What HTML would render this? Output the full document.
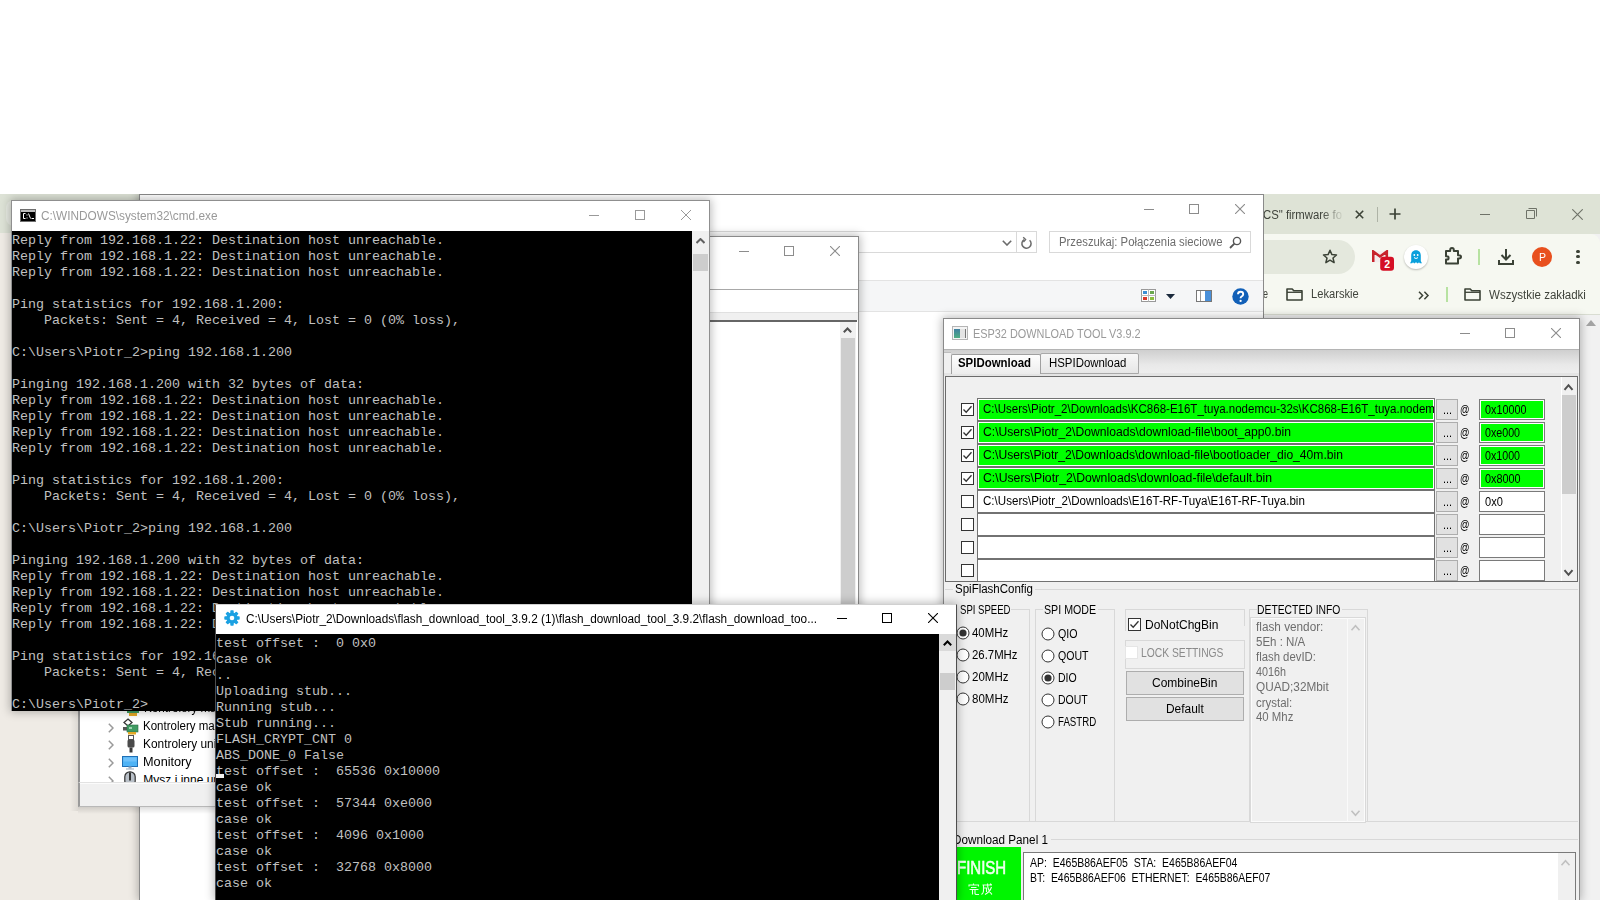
<!DOCTYPE html>
<html><head><meta charset="utf-8">
<style>
*{box-sizing:border-box;margin:0;padding:0}
html,body{width:1600px;height:900px;overflow:hidden;background:#fff;font-family:"Liberation Sans",sans-serif;font-size:12px;color:#000;position:relative}
.a{position:absolute}
.t{position:absolute;white-space:pre;line-height:1}
.mono{font-family:"Liberation Mono",monospace}
.win{position:absolute;overflow:hidden}
.shadow{box-shadow:0 0 9px 1px rgba(0,0,0,.28)}
svg{display:block}
</style></head>
<body>
<div class="a" style="left:0;top:194px;width:1600px;height:706px;background:#efebe5"></div>
<div class="a" style="left:0;top:194px;width:139px;height:39px;background:#dde2d6"></div>
<div class="a" style="left:6px;top:200px;width:8px;height:26px;border-radius:8px 0 0 8px;background:#e8ebe3"></div>
<div class="win shadow" id="explorer" style="left:139px;top:194px;width:1125px;height:706px"><div class="a" style="left:-139px;top:-194px;width:1600px;height:900px">
<div class="a" style="left:139px;top:194px;width:1125px;height:706px;background:#fff;border:1px solid #8a8a8a;border-bottom:none"></div>
<div class="a" style="left:1144px;top:209px;width:10px;height:1px;background:#8c8c8c"></div>
<div class="a" style="left:1189px;top:204px;width:10px;height:10px;border:1px solid #8c8c8c"></div>
<svg class="a" style="left:1235px;top:204px" width="10" height="10"><path d="M0 0L10 10M10 0L0 10" stroke="#8c8c8c" stroke-width="1.1"/></svg>
<div class="a" style="left:600px;top:231px;width:437px;height:22px;background:#fff;border:1px solid #d9d9d9"></div>
<div class="a" style="left:1016px;top:231px;width:1px;height:22px;background:#d9d9d9"></div>
<svg class="a" style="left:1002px;top:240px" width="10" height="6"><path d="M0.8 0.8L5 5L9.2 0.8" stroke="#6b6b6b" stroke-width="1.6" fill="none"/></svg>
<svg class="a" style="left:1020px;top:236px" width="13" height="14" viewBox="0 0 13 14"><path d="M9.6 4.2A4.6 4.6 0 1 1 4.2 3.6" stroke="#6b6b6b" stroke-width="1.5" fill="none"/><path d="M3.2 1.2L5.6 3.6L3.4 6" stroke="#6b6b6b" stroke-width="1.4" fill="none"/></svg>
<div class="a" style="left:1049px;top:231px;width:202px;height:22px;background:#fff;border:1px solid #d9d9d9"></div>
<div class="t" style="left:1058.50px;top:235.84px;font-size:12px;color:#6d6d6d;font-family:'Liberation Sans';transform:scaleX(0.9428);transform-origin:0 0;">Przeszukaj: Połączenia sieciowe</div><svg class="a" style="left:1229px;top:236px" width="13" height="13" viewBox="0 0 13 13"><circle cx="8" cy="5" r="3.6" stroke="#555" stroke-width="1.4" fill="none"/><path d="M5.4 7.6L1 12" stroke="#555" stroke-width="1.8"/></svg>
<div class="a" style="left:140px;top:280px;width:1123px;height:32px;background:#f5f6f7;border-top:1px solid #e3e3e3;border-bottom:1px solid #e3e3e3"></div>
<svg class="a" style="left:1141px;top:289px" width="15" height="13" viewBox="0 0 15 13"><rect x="0.5" y="0.5" width="14" height="12" fill="#fff" stroke="#999"/><path d="M7.5 0.5V12.5M0.5 6.5H14.5" stroke="#bbb"/><rect x="2" y="2" width="4" height="3" fill="#3d8fd6"/><rect x="9" y="2" width="4" height="3" fill="#6aa84f"/><rect x="2" y="8" width="4" height="3" fill="#d9382b"/><rect x="9" y="8" width="4" height="3" fill="#8bbf3f"/></svg>
<svg class="a" style="left:1166px;top:294px" width="9" height="5"><path d="M0 0H9L4.5 5Z" fill="#1b2a3d"/></svg>
<svg class="a" style="left:1196px;top:290px" width="16" height="12" viewBox="0 0 16 12"><rect x="0.5" y="0.5" width="15" height="11" fill="#fff" stroke="#777"/><rect x="9" y="1" width="6" height="10" fill="#4a90d9"/><path d="M4.5 1V11" stroke="#999"/></svg>
<svg class="a" style="left:1232px;top:288px" width="17" height="17" viewBox="0 0 17 17"><circle cx="8.5" cy="8.5" r="8.2" fill="#1260b8"/><path d="M6 6.3Q6 3.8 8.6 3.8Q11.2 3.8 11.2 6.2Q11.2 7.7 9.6 8.5Q8.6 9 8.6 10.3" stroke="#fff" stroke-width="1.9" fill="none"/><circle cx="8.6" cy="12.9" r="1.15" fill="#fff"/></svg>
</div></div>
<div class="win" id="chrome" style="left:1264px;top:194px;width:336px;height:706px"><div class="a" style="left:-1264px;top:-194px;width:1600px;height:900px">
<div class="a" style="left:1264px;top:194px;width:336px;height:706px;background:#f1f1f1"></div>
<div class="a" style="left:1264px;top:194px;width:336px;height:40px;background:#dee3d6"></div>
<div class="a" style="left:1262px;top:200px;width:80px;height:24px;overflow:hidden;-webkit-mask-image:linear-gradient(90deg,#000 60px,transparent 82px)"><div class="t" style="left:1.00px;top:9.34px;font-size:12px;color:#40443c;font-family:'Liberation Sans';transform:scaleX(0.9449);transform-origin:0 0;">CS" firmware fo</div></div>
<svg class="a" style="left:1355px;top:210px" width="9" height="9"><path d="M0.8 0.8L8.2 8.2M8.2 0.8L0.8 8.2" stroke="#3b4236" stroke-width="1.6"/></svg>
<div class="a" style="left:1377px;top:207px;width:1px;height:15px;background:#aeb3a6"></div>
<svg class="a" style="left:1389px;top:208px" width="12" height="12"><path d="M6 0.5V11.5M0.5 6H11.5" stroke="#3b4236" stroke-width="1.7"/></svg>
<div class="a" style="left:1480px;top:214px;width:10px;height:1px;background:#6e7268"></div>
<svg class="a" style="left:1526px;top:208px" width="12" height="12"><path d="M2.5 0.5H10.5V8.5M0.5 2.5H8.5V10.5H0.5Z" stroke="#6e7268" stroke-width="1" fill="none"/></svg>
<svg class="a" style="left:1572px;top:209px" width="11" height="11"><path d="M0.3 0.3L10.7 10.7M10.7 0.3L0.3 10.7" stroke="#6e7268" stroke-width="1.1"/></svg>
<div class="a" style="left:1264px;top:234px;width:336px;height:80px;background:#f6f8f1;border-top-right-radius:9px"></div>
<div class="a" style="left:1200px;top:240px;width:155px;height:34px;background:#e4e8dd;border-radius:17px"></div>
<svg class="a" style="left:1322px;top:249px" width="16" height="15" viewBox="0 0 16 15"><path d="M8 1.3L9.9 5.6L14.5 6L11 9L12.1 13.6L8 11.2L3.9 13.6L5 9L1.5 6L6.1 5.6Z" stroke="#3b4236" stroke-width="1.5" fill="none" stroke-linejoin="round"/></svg>
<svg class="a" style="left:1372px;top:250px" width="23" height="21" viewBox="0 0 23 21"><rect x="0.5" y="0.8" width="15" height="11.5" fill="#f3eded"/><path d="M1.2 12V1.5L8 6.5L14.8 1.5V12" stroke="#c8232c" stroke-width="2.6" fill="none"/><rect x="8.2" y="6.8" width="13.8" height="14" rx="3" fill="#d50f25"/><text x="15.1" y="18" font-family="Liberation Sans" font-weight="bold" font-size="10.5" fill="#fff" text-anchor="middle">2</text></svg>
<div class="a" style="left:1404px;top:245px;width:24px;height:24px;border-radius:50%;background:#fff;box-shadow:0 1px 2px rgba(0,0,0,.25)"></div>
<svg class="a" style="left:1410px;top:250px" width="12" height="14" viewBox="0 0 12 14"><path d="M6 0.3C2.8 0.3 1.2 2.6 1.2 5.6V11Q0.6 12.4 0 13.2H2.2L3 12.2L4.2 13.4L6 12.2L7.8 13.4L9 12.2L9.8 13.2H12Q11.4 12.4 10.8 11V5.6C10.8 2.6 9.2 0.3 6 0.3Z" fill="#0aa0dc"/><circle cx="4.3" cy="5" r="0.9" fill="#fff"/><circle cx="7.7" cy="5" r="0.9" fill="#fff"/><path d="M4 7.6Q6 9.4 8 7.6" stroke="#fff" stroke-width="1" fill="none"/></svg>
<svg class="a" style="left:1444px;top:247px" width="19" height="18" viewBox="0 0 19 18"><path d="M2 4H6.2V3Q6.2 1 8 1Q9.8 1 9.8 3V4H14V8.2H15Q17 8.2 17 9.8Q17 11.4 15 11.4H14V16.5H2V12.5H3Q4.6 12.5 4.6 10.9Q4.6 9.3 3 9.3H2Z" stroke="#3b4236" stroke-width="2" fill="none" stroke-linejoin="round"/></svg>
<div class="a" style="left:1478px;top:249px;width:2px;height:16px;background:#b7e2a1"></div>
<svg class="a" style="left:1497px;top:248px" width="18" height="18" viewBox="0 0 18 18"><path d="M9 1V11.5M4.5 7L9 11.5L13.5 7" stroke="#3b4236" stroke-width="2" fill="none"/><path d="M2 12V16H16V12" stroke="#3b4236" stroke-width="2" fill="none"/></svg>
<div class="a" style="left:1532px;top:247px;width:20px;height:20px;border-radius:50%;background:#e8501e"></div>
<div class="t" style="left:1538.50px;top:252.19px;font-size:11px;color:#fff;font-family:'Liberation Sans';transform:scaleX(0.9541);transform-origin:0 0;">P</div><div class="a" style="left:1576.4px;top:249.6px;width:3.2px;height:3.2px;border-radius:50%;background:#3b4236"></div>
<div class="a" style="left:1576.4px;top:255.0px;width:3.2px;height:3.2px;border-radius:50%;background:#3b4236"></div>
<div class="a" style="left:1576.4px;top:260.5px;width:3.2px;height:3.2px;border-radius:50%;background:#3b4236"></div>
<div class="t" style="left:1263.00px;top:288.34px;font-size:12px;color:#40443c;font-family:'Liberation Sans';transform:scaleX(0.7494);transform-origin:0 0;">e</div><svg class="a" style="left:1286px;top:288px" width="17" height="13" viewBox="0 0 17 13"><path d="M1 1H6.2L7.8 2.8H16V12H1Z" stroke="#3b4236" stroke-width="1.6" fill="none" stroke-linejoin="round"/><path d="M1 4.3H16" stroke="#3b4236" stroke-width="1.3"/></svg>
<div class="t" style="left:1310.60px;top:288.24px;font-size:12px;color:#40443c;font-family:'Liberation Sans';transform:scaleX(0.9287);transform-origin:0 0;">Lekarskie</div><svg class="a" style="left:1418px;top:291px" width="12" height="9"><path d="M1 0.8L4.6 4.5L1 8.2M6.4 0.8L10 4.5L6.4 8.2" stroke="#3b4236" stroke-width="1.5" fill="none"/></svg>
<div class="a" style="left:1446px;top:287px;width:2px;height:15px;background:#b7e2a1"></div>
<svg class="a" style="left:1464px;top:288px" width="17" height="13" viewBox="0 0 17 13"><path d="M1 1H6.2L7.8 2.8H16V12H1Z" stroke="#3b4236" stroke-width="1.6" fill="none" stroke-linejoin="round"/><path d="M1 4.3H16" stroke="#3b4236" stroke-width="1.3"/></svg>
<div class="t" style="left:1488.60px;top:288.84px;font-size:12px;color:#40443c;font-family:'Liberation Sans';transform:scaleX(0.9623);transform-origin:0 0;">Wszystkie zakładki</div><div class="a" style="left:1264px;top:314px;width:336px;height:1px;background:#d9ddd2"></div>
<svg class="a" style="left:1586px;top:320px" width="10" height="6"><path d="M0 6L5 0L10 6Z" fill="#a3a3a3"/></svg>
</div></div>
<div class="win" id="devmgr" style="left:70px;top:640px;width:146px;height:180px;overflow:hidden"><div class="a" style="left:-70px;top:-640px;width:1600px;height:900px">
<div class="a" style="left:78px;top:640px;width:322px;height:143px;background:#fff;border-left:2px solid #939393"></div>
<svg class="a" style="left:126px;top:706px" width="14" height="11"><rect x="1" y="0" width="12" height="7" fill="#3f9b62"/><rect x="3" y="7" width="8" height="3" fill="#e3a824"/></svg>
<div class="t" style="left:143.50px;top:701.84px;font-size:12px;color:#000;font-family:'Liberation Sans';transform:scaleX(0.9750);transform-origin:0 0;">Kontrolery magazynu</div><svg class="a" style="left:108px;top:722.5px" width="6" height="10"><path d="M0.8 0.8L5 5L0.8 9.2" stroke="#9a9a9a" stroke-width="1.5" fill="none"/></svg>
<svg class="a" style="left:122px;top:718px" width="17" height="17" viewBox="0 0 17 17"><path d="M6 1L10 4.5L6 8L2 4.5Z" stroke="#333" stroke-width="1.3" fill="#fff"/><rect x="1" y="9" width="5" height="3.5" fill="#555"/><rect x="5" y="7" width="11" height="7" fill="#3f9b62" stroke="#2d6e46" stroke-width="0.6"/><rect x="7" y="9" width="3" height="2" fill="#9fd3b0"/><rect x="6" y="14" width="8" height="2.5" fill="#e3a824"/></svg>
<div class="t" style="left:143.30px;top:720.34px;font-size:12px;color:#000;font-family:'Liberation Sans';transform:scaleX(0.9600);transform-origin:0 0;">Kontrolery magistrali</div><svg class="a" style="left:108px;top:740.3px" width="6" height="10"><path d="M0.8 0.8L5 5L0.8 9.2" stroke="#9a9a9a" stroke-width="1.5" fill="none"/></svg>
<svg class="a" style="left:127px;top:735px" width="8" height="18" viewBox="0 0 8 18"><rect x="1.5" y="0.5" width="5" height="4" fill="#fff" stroke="#555"/><rect x="0.5" y="4.5" width="7" height="8" rx="1.5" fill="#4a4a4a"/><rect x="2.5" y="12.5" width="3" height="5" fill="#3a3a3a"/></svg>
<div class="t" style="left:143.30px;top:738.34px;font-size:12px;color:#000;font-family:'Liberation Sans';transform:scaleX(0.9900);transform-origin:0 0;">Kontrolery uniwersalnej</div><svg class="a" style="left:108px;top:758.4px" width="6" height="10"><path d="M0.8 0.8L5 5L0.8 9.2" stroke="#9a9a9a" stroke-width="1.5" fill="none"/></svg>
<svg class="a" style="left:122px;top:756px" width="16" height="14" viewBox="0 0 16 14"><rect x="0.5" y="0.5" width="15" height="10" fill="#4fb3f5" stroke="#1f6fb5"/><rect x="1.5" y="1.5" width="13" height="4" fill="#8fd0ff" opacity=".5"/><rect x="6.5" y="10.5" width="3" height="2" fill="#9ab"/><rect x="4" y="12.5" width="8" height="1" fill="#9ab"/></svg>
<div class="t" style="left:143.30px;top:756.34px;font-size:12px;color:#000;font-family:'Liberation Sans';transform:scaleX(1.0582);transform-origin:0 0;">Monitory</div><svg class="a" style="left:108px;top:776.0px" width="6" height="10"><path d="M0.8 0.8L5 5L0.8 9.2" stroke="#9a9a9a" stroke-width="1.5" fill="none"/></svg>
<svg class="a" style="left:124px;top:771px" width="12" height="12" viewBox="0 0 12 12"><rect x="0.8" y="0.8" width="10.4" height="14" rx="5" fill="#b9c0c8" stroke="#333" stroke-width="1.2"/><rect x="5" y="1.5" width="2" height="8" fill="#333"/></svg>
<div class="t" style="left:143.30px;top:774.34px;font-size:12px;color:#000;font-family:'Liberation Sans';transform:scaleX(1.0000);transform-origin:0 0;">Mysz i inne urządzenia</div><div class="a" style="left:78px;top:782px;width:322px;height:25px;background:#f0f0f0;border-left:2px solid #9a9a9a;border-top:1px solid #e2e2e2;border-bottom:1px solid #b8b8b8;box-shadow:inset 0 1px 0 #fbfbfb"></div>
</div></div>
<div class="a" style="left:78px;top:807px;width:138px;height:7px;background:linear-gradient(rgba(0,0,0,.13),rgba(0,0,0,0))"></div>
<div class="a" style="left:70px;top:711px;width:8px;height:100px;background:linear-gradient(90deg,rgba(0,0,0,0),rgba(0,0,0,.08))"></div>
<div class="win shadow" id="mid" style="left:709px;top:236px;width:150px;height:664px"><div class="a" style="left:-709px;top:-236px;width:1600px;height:900px">
<div class="a" style="left:700px;top:236px;width:159px;height:664px;background:#fff;border:1px solid #8a8a8a"></div>
<div class="a" style="left:739px;top:251px;width:10px;height:1px;background:#8c8c8c"></div>
<div class="a" style="left:784px;top:246px;width:10px;height:10px;border:1px solid #8c8c8c"></div>
<svg class="a" style="left:830px;top:246px" width="10" height="10"><path d="M0 0L10 10M10 0L0 10" stroke="#8c8c8c" stroke-width="1.1"/></svg>
<div class="a" style="left:701px;top:289px;width:157px;height:1px;background:#a8a8a8"></div>
<div class="a" style="left:701px;top:312px;width:157px;height:8px;background:#f0f0f0;border-top:1px solid #e0e0e0"></div>
<div class="a" style="left:701px;top:320px;width:156px;height:2px;background:#666"></div>
<div class="a" style="left:840px;top:322px;width:16px;height:578px;background:#f0f0f0"></div>
<svg class="a" style="left:843px;top:327px" width="9" height="6"><path d="M0.8 5.2L4.5 1.5L8.2 5.2" stroke="#505050" stroke-width="2" fill="none"/></svg>
<div class="a" style="left:841px;top:338px;width:14px;height:562px;background:#cdcdcd"></div>
</div></div>
<div class="win shadow" id="cmd" style="left:11px;top:200px;width:699px;height:511px;background:#fff">
 <div class="a" style="left:0;top:0;width:699px;height:511px;border:1px solid #8f8f8f;border-bottom:none"></div>
 <svg class="a" style="left:9px;top:9px" width="16" height="13" viewBox="0 0 16 13"><rect x="0.5" y="0.5" width="15" height="12" fill="#000" stroke="#6e6e6e"/><rect x="1" y="1" width="14" height="2" fill="#bdbdbd"/><path d="M5.5 4.5H3.5V9.5H5.5M7 5.5V6.5M7 8.5V9.5M8.5 4.5L10.5 9.5M11.5 9.5H14" stroke="#fff" stroke-width="1" fill="none"/></svg>
 <div class="t" style="left:30.00px;top:9.84px;font-size:12px;color:#999;font-family:'Liberation Sans';transform:scaleX(0.9840);transform-origin:0 0;">C:\WINDOWS\system32\cmd.exe</div>
 <div class="a" style="left:578px;top:15px;width:10px;height:1px;background:#999"></div>
 <div class="a" style="left:624px;top:10px;width:10px;height:10px;border:1px solid #999"></div>
 <svg class="a" style="left:670px;top:10px" width="10" height="10"><path d="M0 0L10 10M10 0L0 10" stroke="#999" stroke-width="1"/></svg>
 <div class="a mono" style="left:1px;top:31px;width:680px;height:480px;background:#000;color:#c0c0c0;font-size:13.33px;line-height:16px;white-space:pre;padding-top:2px">Reply from 192.168.1.22: Destination host unreachable.
Reply from 192.168.1.22: Destination host unreachable.
Reply from 192.168.1.22: Destination host unreachable.

Ping statistics for 192.168.1.200:
    Packets: Sent = 4, Received = 4, Lost = 0 (0% loss),

C:\Users\Piotr_2&gt;ping 192.168.1.200

Pinging 192.168.1.200 with 32 bytes of data:
Reply from 192.168.1.22: Destination host unreachable.
Reply from 192.168.1.22: Destination host unreachable.
Reply from 192.168.1.22: Destination host unreachable.
Reply from 192.168.1.22: Destination host unreachable.

Ping statistics for 192.168.1.200:
    Packets: Sent = 4, Received = 4, Lost = 0 (0% loss),

C:\Users\Piotr_2&gt;ping 192.168.1.200

Pinging 192.168.1.200 with 32 bytes of data:
Reply from 192.168.1.22: Destination host unreachable.
Reply from 192.168.1.22: Destination host unreachable.
Reply from 192.168.1.22: Destination host unreachable.
Reply from 192.168.1.22: Destination host unreachable.

Ping statistics for 192.168.1.200:
    Packets: Sent = 4, Received = 4, Lost = 0 (0% loss),

C:\Users\Piotr_2&gt;</div>
 <div class="a" style="left:681px;top:31px;width:17px;height:480px;background:#f0f0f0"></div>
 <svg class="a" style="left:685px;top:38px" width="9" height="6"><path d="M0.5 5L4.5 1L8.5 5" stroke="#606060" stroke-width="2" fill="none"/></svg>
 <div class="a" style="left:682px;top:54px;width:15px;height:17px;background:#cdcdcd"></div>
</div>
<div class="win shadow" id="esp" style="left:943px;top:318px;width:637px;height:582px"><div class="a" style="left:-943px;top:-318px;width:1600px;height:900px">
<div class="a" style="left:943px;top:318px;width:637px;height:582px;background:#f0f0f0;border:1px solid #8a8a8a;border-bottom:none"></div>
<div class="a" style="left:944px;top:319px;width:635px;height:30px;background:#fff"></div>
<svg class="a" style="left:952px;top:326px" width="16" height="14"><defs><linearGradient id="eg" x1="0" y1="0" x2="0" y2="1"><stop offset="0" stop-color="#3f7fa0"/><stop offset="1" stop-color="#4fae82"/></linearGradient></defs><rect x="0.5" y="0.5" width="15" height="13" fill="#f4f4f4" stroke="#b5b5b5"/><rect x="2" y="3" width="6" height="9" fill="url(#eg)"/><rect x="8" y="3" width="5" height="9" fill="#e4e4e4"/><rect x="13" y="3" width="1" height="9" fill="#777"/></svg>
<div class="t" style="left:973.30px;top:327.84px;font-size:12px;color:#9a9a9a;font-family:'Liberation Sans';transform:scaleX(0.9083);transform-origin:0 0;">ESP32 DOWNLOAD TOOL V3.9.2</div><div class="a" style="left:1460px;top:333px;width:10px;height:1px;background:#8c8c8c"></div>
<div class="a" style="left:1505px;top:328px;width:10px;height:10px;border:1px solid #8c8c8c"></div>
<svg class="a" style="left:1551px;top:328px" width="10" height="10"><path d="M0 0L10 10M10 0L0 10" stroke="#8c8c8c" stroke-width="1.1"/></svg>
<div class="a" style="left:944px;top:349px;width:635px;height:1px;background:#b4b4b4"></div>
<div class="a" style="left:944px;top:350px;width:635px;height:27px;background:linear-gradient(#cfcfcf,#e9e9e9 55%,#f0f0f0)"></div>
<div class="a" style="left:944px;top:352px;width:7px;height:22px;background:#f0f0f0;border-top:1px solid #bdbdbd"></div>
<div class="a" style="left:944px;top:373px;width:635px;height:3px;background:#e4e4e4"></div>
<div class="a" style="left:1040px;top:353px;width:99px;height:21px;background:linear-gradient(#f7f7f7,#e6e6e6);border:1px solid #a9a9a9;border-radius:2px 2px 0 0"></div>
<div class="t" style="left:1049.00px;top:356.84px;font-size:12px;color:#000;font-family:'Liberation Sans';transform:scaleX(0.9512);transform-origin:0 0;">HSPIDownload</div><div class="a" style="left:951px;top:354px;width:90px;height:20px;background:linear-gradient(#fefefe,#f4f4f4 60%,#ececec);border:1px solid #a0a0a0;border-bottom:none;border-radius:2px 2px 0 0"></div>
<div class="t" style="left:958.00px;top:356.84px;font-size:12px;color:#000;font-family:'Liberation Sans';font-weight:bold;transform:scaleX(0.9522);transform-origin:0 0;">SPIDownload</div><div class="a" style="left:945px;top:376px;width:633px;height:206px;background:#f0f0f0;border:1px solid #6b6b6b"></div>
<div class="a" style="left:1561px;top:377px;width:16px;height:204px;background:#f0f0f0;border-left:1px solid #fff"></div>
<svg class="a" style="left:0;top:0;overflow:visible" width="1" height="1"><path d="M1564.5 389.8L1568.5 385.2L1572.5 389.8" stroke="#505050" stroke-width="2" fill="none"/></svg>
<div class="a" style="left:1562px;top:395px;width:14px;height:99px;background:#cdcdcd"></div>
<svg class="a" style="left:0;top:0;overflow:visible" width="1" height="1"><path d="M1564.5 570.2L1568.5 574.8L1572.5 570.2" stroke="#505050" stroke-width="2" fill="none"/></svg>
<div class="a" style="left:961px;top:403px;width:13px;height:13px;background:#fff;border:1px solid #333"></div>
<svg class="a" style="left:961px;top:403px" width="13" height="13"><path d="M2.5 6.5L5.2 9.3L10.5 3.2" stroke="#333" stroke-width="1.3" fill="none"/></svg>
<div class="a" style="left:977px;top:398px;width:458px;height:23px;background:#00ff00;border:1px solid #727272;box-shadow:inset 0 0 0 1px #fff"></div>
<div class="a" style="left:978px;top:399px;width:456px;height:21px;overflow:hidden"><div class="t" style="left:5.30px;top:3.84px;font-size:12px;transform:scaleX(0.9596);transform-origin:0 0">C:\Users\Piotr_2\Downloads\KC868-E16T_tuya.nodemcu-32s\KC868-E16T_tuya.nodemcu-32s.ino.bin</div></div>
<div class="a" style="left:1436px;top:399px;width:22px;height:21px;background:#e1e1e1;border:1px solid #adadad"></div>
<div class="t" style="left:1443.00px;top:404.34px;font-size:12px;color:#000;font-family:'Liberation Sans';transform:scaleX(0.9004);transform-origin:0 0;">...</div><div class="t" style="left:1460.00px;top:403.84px;font-size:12px;color:#000;font-family:'Liberation Sans';transform:scaleX(0.7800);transform-origin:0 0;">@</div><div class="a" style="left:1479px;top:399px;width:66px;height:21px;background:#00ff00;border:1px solid #7a7a7a;box-shadow:inset 0 0 0 1px #fff"></div>
<div class="t" style="left:1485.40px;top:404.04px;font-size:12px;color:#000;font-family:'Liberation Sans';transform:scaleX(0.8991);transform-origin:0 0;">0x10000</div><div class="a" style="left:961px;top:426px;width:13px;height:13px;background:#fff;border:1px solid #333"></div>
<svg class="a" style="left:961px;top:426px" width="13" height="13"><path d="M2.5 6.5L5.2 9.3L10.5 3.2" stroke="#333" stroke-width="1.3" fill="none"/></svg>
<div class="a" style="left:977px;top:421px;width:458px;height:23px;background:#00ff00;border:1px solid #727272;box-shadow:inset 0 0 0 1px #fff"></div>
<div class="t" style="left:983.30px;top:425.84px;font-size:12px;color:#000;font-family:'Liberation Sans';transform:scaleX(1.0122);transform-origin:0 0;">C:\Users\Piotr_2\Downloads\download-file\boot_app0.bin</div><div class="a" style="left:1436px;top:422px;width:22px;height:21px;background:#e1e1e1;border:1px solid #adadad"></div>
<div class="t" style="left:1443.00px;top:427.34px;font-size:12px;color:#000;font-family:'Liberation Sans';transform:scaleX(0.9004);transform-origin:0 0;">...</div><div class="t" style="left:1460.00px;top:426.84px;font-size:12px;color:#000;font-family:'Liberation Sans';transform:scaleX(0.7800);transform-origin:0 0;">@</div><div class="a" style="left:1479px;top:422px;width:66px;height:21px;background:#00ff00;border:1px solid #7a7a7a;box-shadow:inset 0 0 0 1px #fff"></div>
<div class="t" style="left:1485.40px;top:427.04px;font-size:12px;color:#000;font-family:'Liberation Sans';transform:scaleX(0.8890);transform-origin:0 0;">0xe000</div><div class="a" style="left:961px;top:449px;width:13px;height:13px;background:#fff;border:1px solid #333"></div>
<svg class="a" style="left:961px;top:449px" width="13" height="13"><path d="M2.5 6.5L5.2 9.3L10.5 3.2" stroke="#333" stroke-width="1.3" fill="none"/></svg>
<div class="a" style="left:977px;top:444px;width:458px;height:23px;background:#00ff00;border:1px solid #727272;box-shadow:inset 0 0 0 1px #fff"></div>
<div class="t" style="left:983.30px;top:448.84px;font-size:12px;color:#000;font-family:'Liberation Sans';transform:scaleX(1.0085);transform-origin:0 0;">C:\Users\Piotr_2\Downloads\download-file\bootloader_dio_40m.bin</div><div class="a" style="left:1436px;top:445px;width:22px;height:21px;background:#e1e1e1;border:1px solid #adadad"></div>
<div class="t" style="left:1443.00px;top:450.34px;font-size:12px;color:#000;font-family:'Liberation Sans';transform:scaleX(0.9004);transform-origin:0 0;">...</div><div class="t" style="left:1460.00px;top:449.84px;font-size:12px;color:#000;font-family:'Liberation Sans';transform:scaleX(0.7800);transform-origin:0 0;">@</div><div class="a" style="left:1479px;top:445px;width:66px;height:21px;background:#00ff00;border:1px solid #7a7a7a;box-shadow:inset 0 0 0 1px #fff"></div>
<div class="t" style="left:1485.40px;top:450.04px;font-size:12px;color:#000;font-family:'Liberation Sans';transform:scaleX(0.8890);transform-origin:0 0;">0x1000</div><div class="a" style="left:961px;top:472px;width:13px;height:13px;background:#fff;border:1px solid #333"></div>
<svg class="a" style="left:961px;top:472px" width="13" height="13"><path d="M2.5 6.5L5.2 9.3L10.5 3.2" stroke="#333" stroke-width="1.3" fill="none"/></svg>
<div class="a" style="left:977px;top:467px;width:458px;height:23px;background:#00ff00;border:1px solid #727272;box-shadow:inset 0 0 0 1px #fff"></div>
<div class="t" style="left:983.30px;top:471.84px;font-size:12px;color:#000;font-family:'Liberation Sans';transform:scaleX(1.0194);transform-origin:0 0;">C:\Users\Piotr_2\Downloads\download-file\default.bin</div><div class="a" style="left:1436px;top:468px;width:22px;height:21px;background:#e1e1e1;border:1px solid #adadad"></div>
<div class="t" style="left:1443.00px;top:473.34px;font-size:12px;color:#000;font-family:'Liberation Sans';transform:scaleX(0.9004);transform-origin:0 0;">...</div><div class="t" style="left:1460.00px;top:472.84px;font-size:12px;color:#000;font-family:'Liberation Sans';transform:scaleX(0.7800);transform-origin:0 0;">@</div><div class="a" style="left:1479px;top:468px;width:66px;height:21px;background:#00ff00;border:1px solid #7a7a7a;box-shadow:inset 0 0 0 1px #fff"></div>
<div class="t" style="left:1485.40px;top:473.04px;font-size:12px;color:#000;font-family:'Liberation Sans';transform:scaleX(0.9042);transform-origin:0 0;">0x8000</div><div class="a" style="left:961px;top:495px;width:13px;height:13px;background:#fff;border:1px solid #333"></div>
<div class="a" style="left:977px;top:490px;width:458px;height:23px;background:#fff;border:1px solid #727272;box-shadow:inset 0 0 0 1px #fff"></div>
<div class="t" style="left:983.30px;top:494.84px;font-size:12px;color:#000;font-family:'Liberation Sans';transform:scaleX(0.9660);transform-origin:0 0;">C:\Users\Piotr_2\Downloads\E16T-RF-Tuya\E16T-RF-Tuya.bin</div><div class="a" style="left:1436px;top:491px;width:22px;height:21px;background:#e1e1e1;border:1px solid #adadad"></div>
<div class="t" style="left:1443.00px;top:496.34px;font-size:12px;color:#000;font-family:'Liberation Sans';transform:scaleX(0.9004);transform-origin:0 0;">...</div><div class="t" style="left:1460.00px;top:495.84px;font-size:12px;color:#000;font-family:'Liberation Sans';transform:scaleX(0.7800);transform-origin:0 0;">@</div><div class="a" style="left:1479px;top:491px;width:66px;height:21px;background:#fff;border:1px solid #7a7a7a;box-shadow:inset 0 0 0 1px #fff"></div>
<div class="t" style="left:1485.40px;top:496.04px;font-size:12px;color:#000;font-family:'Liberation Sans';transform:scaleX(0.9202);transform-origin:0 0;">0x0</div><div class="a" style="left:961px;top:518px;width:13px;height:13px;background:#fff;border:1px solid #333"></div>
<div class="a" style="left:977px;top:513px;width:458px;height:23px;background:#fff;border:1px solid #727272;box-shadow:inset 0 0 0 1px #fff"></div>
<div class="a" style="left:1436px;top:514px;width:22px;height:21px;background:#e1e1e1;border:1px solid #adadad"></div>
<div class="t" style="left:1443.00px;top:519.34px;font-size:12px;color:#000;font-family:'Liberation Sans';transform:scaleX(0.9004);transform-origin:0 0;">...</div><div class="t" style="left:1460.00px;top:518.84px;font-size:12px;color:#000;font-family:'Liberation Sans';transform:scaleX(0.7800);transform-origin:0 0;">@</div><div class="a" style="left:1479px;top:514px;width:66px;height:21px;background:#fff;border:1px solid #7a7a7a;box-shadow:inset 0 0 0 1px #fff"></div>
<div class="a" style="left:961px;top:541px;width:13px;height:13px;background:#fff;border:1px solid #333"></div>
<div class="a" style="left:977px;top:536px;width:458px;height:23px;background:#fff;border:1px solid #727272;box-shadow:inset 0 0 0 1px #fff"></div>
<div class="a" style="left:1436px;top:537px;width:22px;height:21px;background:#e1e1e1;border:1px solid #adadad"></div>
<div class="t" style="left:1443.00px;top:542.34px;font-size:12px;color:#000;font-family:'Liberation Sans';transform:scaleX(0.9004);transform-origin:0 0;">...</div><div class="t" style="left:1460.00px;top:541.84px;font-size:12px;color:#000;font-family:'Liberation Sans';transform:scaleX(0.7800);transform-origin:0 0;">@</div><div class="a" style="left:1479px;top:537px;width:66px;height:21px;background:#fff;border:1px solid #7a7a7a;box-shadow:inset 0 0 0 1px #fff"></div>
<div class="a" style="left:961px;top:564px;width:13px;height:13px;background:#fff;border:1px solid #333"></div>
<div class="a" style="left:977px;top:559px;width:458px;height:23px;background:#fff;border:1px solid #727272;box-shadow:inset 0 0 0 1px #fff"></div>
<div class="a" style="left:1436px;top:560px;width:22px;height:21px;background:#e1e1e1;border:1px solid #adadad"></div>
<div class="t" style="left:1443.00px;top:565.34px;font-size:12px;color:#000;font-family:'Liberation Sans';transform:scaleX(0.9004);transform-origin:0 0;">...</div><div class="t" style="left:1460.00px;top:564.84px;font-size:12px;color:#000;font-family:'Liberation Sans';transform:scaleX(0.7800);transform-origin:0 0;">@</div><div class="a" style="left:1479px;top:560px;width:66px;height:21px;background:#fff;border:1px solid #7a7a7a;box-shadow:inset 0 0 0 1px #fff"></div>
<div class="a" style="left:945px;top:589px;width:8px;height:1px;background:#d8d8d8"></div>
<div class="a" style="left:1035px;top:589px;width:543px;height:1px;background:#d8d8d8"></div>
<div class="a" style="left:946px;top:821px;width:632px;height:1px;background:#d8d8d8"></div>
<div class="t" style="left:954.50px;top:583.34px;font-size:12px;color:#000;font-family:'Liberation Sans';transform:scaleX(0.9586);transform-origin:0 0;">SpiFlashConfig</div><div class="a" style="left:1011px;top:609px;width:19px;height:1px;background:#d8d8d8"></div>
<div class="a" style="left:1029px;top:609px;width:1px;height:213px;background:#d8d8d8"></div>
<div class="t" style="left:959.50px;top:603.64px;font-size:12px;color:#000;font-family:'Liberation Sans';transform:scaleX(0.7970);transform-origin:0 0;">SPI SPEED</div><svg class="a" style="left:956px;top:626px" width="14" height="14"><circle cx="7" cy="7" r="6" fill="#fff" stroke="#333" stroke-width="1"/><circle cx="7" cy="7" r="3.6" fill="#333"/></svg>
<div class="t" style="left:972.30px;top:627.34px;font-size:12px;color:#000;font-family:'Liberation Sans';transform:scaleX(0.9522);transform-origin:0 0;">40MHz</div><svg class="a" style="left:956px;top:648px" width="14" height="14"><circle cx="7" cy="7" r="6" fill="#fff" stroke="#333" stroke-width="1"/></svg>
<div class="t" style="left:972.30px;top:649.34px;font-size:12px;color:#000;font-family:'Liberation Sans';transform:scaleX(0.9477);transform-origin:0 0;">26.7MHz</div><svg class="a" style="left:956px;top:670px" width="14" height="14"><circle cx="7" cy="7" r="6" fill="#fff" stroke="#333" stroke-width="1"/></svg>
<div class="t" style="left:972.30px;top:671.34px;font-size:12px;color:#000;font-family:'Liberation Sans';transform:scaleX(0.9601);transform-origin:0 0;">20MHz</div><svg class="a" style="left:956px;top:692px" width="14" height="14"><circle cx="7" cy="7" r="6" fill="#fff" stroke="#333" stroke-width="1"/></svg>
<div class="t" style="left:972.30px;top:693.34px;font-size:12px;color:#000;font-family:'Liberation Sans';transform:scaleX(0.9601);transform-origin:0 0;">80MHz</div><div class="a" style="left:1035px;top:609px;width:8px;height:1px;background:#d8d8d8"></div>
<div class="a" style="left:1098px;top:609px;width:17px;height:1px;background:#d8d8d8"></div>
<div class="a" style="left:1035px;top:609px;width:1px;height:213px;background:#d8d8d8"></div>
<div class="a" style="left:1114px;top:609px;width:1px;height:213px;background:#d8d8d8"></div>
<div class="t" style="left:1044.40px;top:603.84px;font-size:12px;color:#000;font-family:'Liberation Sans';transform:scaleX(0.8879);transform-origin:0 0;">SPI MODE</div><svg class="a" style="left:1040.5px;top:626.5px" width="14" height="14"><circle cx="7" cy="7" r="6" fill="#fff" stroke="#333" stroke-width="1"/></svg>
<div class="t" style="left:1058.00px;top:627.84px;font-size:12px;color:#000;font-family:'Liberation Sans';transform:scaleX(0.8865);transform-origin:0 0;">QIO</div><svg class="a" style="left:1040.5px;top:648.5px" width="14" height="14"><circle cx="7" cy="7" r="6" fill="#fff" stroke="#333" stroke-width="1"/></svg>
<div class="t" style="left:1058.00px;top:649.84px;font-size:12px;color:#000;font-family:'Liberation Sans';transform:scaleX(0.8798);transform-origin:0 0;">QOUT</div><svg class="a" style="left:1040.5px;top:670.5px" width="14" height="14"><circle cx="7" cy="7" r="6" fill="#fff" stroke="#333" stroke-width="1"/><circle cx="7" cy="7" r="3.6" fill="#333"/></svg>
<div class="t" style="left:1058.00px;top:671.84px;font-size:12px;color:#000;font-family:'Liberation Sans';transform:scaleX(0.8765);transform-origin:0 0;">DIO</div><svg class="a" style="left:1040.5px;top:692.5px" width="14" height="14"><circle cx="7" cy="7" r="6" fill="#fff" stroke="#333" stroke-width="1"/></svg>
<div class="t" style="left:1058.00px;top:693.84px;font-size:12px;color:#000;font-family:'Liberation Sans';transform:scaleX(0.8736);transform-origin:0 0;">DOUT</div><svg class="a" style="left:1040.5px;top:714.5px" width="14" height="14"><circle cx="7" cy="7" r="6" fill="#fff" stroke="#333" stroke-width="1"/></svg>
<div class="t" style="left:1058.00px;top:715.84px;font-size:12px;color:#000;font-family:'Liberation Sans';transform:scaleX(0.8069);transform-origin:0 0;">FASTRD</div><div class="a" style="left:1125px;top:609px;width:120px;height:1px;background:#d8d8d8"></div>
<div class="a" style="left:1125px;top:609px;width:1px;height:22px;background:#d8d8d8"></div>
<div class="a" style="left:1244px;top:609px;width:1px;height:17px;background:#d8d8d8"></div>
<div class="a" style="left:1128px;top:618px;width:13px;height:13px;background:#fff;border:1px solid #333"></div>
<svg class="a" style="left:1128px;top:618px" width="13" height="13"><path d="M2.5 6.5L5.2 9.3L10.5 3.2" stroke="#333" stroke-width="1.3" fill="none"/></svg>
<div class="t" style="left:1144.50px;top:618.74px;font-size:12px;color:#000;font-family:'Liberation Sans';transform:scaleX(0.9991);transform-origin:0 0;">DoNotChgBin</div><div class="a" style="left:1125px;top:640px;width:120px;height:29px;border:1px solid #d8d8d8"></div>
<div class="a" style="left:1125px;top:646px;width:13px;height:13px;background:#fff;border:1px solid #e6e6e6"></div>
<div class="t" style="left:1141.40px;top:646.74px;font-size:12px;color:#8a8a8a;font-family:'Liberation Sans';transform:scaleX(0.8592);transform-origin:0 0;">LOCK SETTINGS</div><div class="a" style="left:1126px;top:671px;width:118px;height:24px;background:#e1e1e1;border:1px solid #adadad"></div>
<div class="t" style="left:1152.30px;top:676.64px;font-size:12px;color:#000;font-family:'Liberation Sans';transform:scaleX(0.9990);transform-origin:0 0;">CombineBin</div><div class="a" style="left:1126px;top:697px;width:118px;height:24px;background:#e1e1e1;border:1px solid #adadad"></div>
<div class="t" style="left:1166.30px;top:702.54px;font-size:12px;color:#000;font-family:'Liberation Sans';transform:scaleX(0.9917);transform-origin:0 0;">Default</div><div class="a" style="left:1249px;top:609px;width:8px;height:1px;background:#d8d8d8"></div>
<div class="a" style="left:1342px;top:609px;width:26px;height:1px;background:#d8d8d8"></div>
<div class="a" style="left:1249px;top:609px;width:1px;height:213px;background:#d8d8d8"></div>
<div class="a" style="left:1367px;top:609px;width:1px;height:213px;background:#d8d8d8"></div>
<div class="t" style="left:1257.40px;top:603.84px;font-size:12px;color:#000;font-family:'Liberation Sans';transform:scaleX(0.8627);transform-origin:0 0;">DETECTED INFO</div><div class="a" style="left:1250px;top:617px;width:116px;height:206px;background:#f0f0f0;border:1px solid #d9d9d9;box-shadow:inset 0 0 0 1px #fbfbfb"></div>
<div class="a" style="left:1347px;top:618px;width:1px;height:204px;background:#fafafa"></div>
<svg class="a" style="left:0;top:0;overflow:visible" width="1" height="1"><path d="M1351.5 630.2L1355.5 625.8L1359.5 630.2" stroke="#c0c0c0" stroke-width="1.6" fill="none"/></svg>
<svg class="a" style="left:0;top:0;overflow:visible" width="1" height="1"><path d="M1351.5 810.8L1355.5 815.2L1359.5 810.8" stroke="#c0c0c0" stroke-width="1.6" fill="none"/></svg>
<div class="t" style="left:1256.30px;top:621.34px;font-size:12px;color:#6d6d6d;font-family:'Liberation Sans';transform:scaleX(0.9809);transform-origin:0 0;">flash vendor:</div><div class="t" style="left:1256.30px;top:636.14px;font-size:12px;color:#6d6d6d;font-family:'Liberation Sans';transform:scaleX(0.9599);transform-origin:0 0;">5Eh : N/A</div><div class="t" style="left:1256.30px;top:651.44px;font-size:12px;color:#6d6d6d;font-family:'Liberation Sans';transform:scaleX(0.9454);transform-origin:0 0;">flash devID:</div><div class="t" style="left:1256.30px;top:666.44px;font-size:12px;color:#6d6d6d;font-family:'Liberation Sans';transform:scaleX(0.8990);transform-origin:0 0;">4016h</div><div class="t" style="left:1256.30px;top:681.24px;font-size:12px;color:#6d6d6d;font-family:'Liberation Sans';transform:scaleX(0.9822);transform-origin:0 0;">QUAD;32Mbit</div><div class="t" style="left:1256.30px;top:696.54px;font-size:12px;color:#6d6d6d;font-family:'Liberation Sans';transform:scaleX(0.9552);transform-origin:0 0;">crystal:</div><div class="t" style="left:1256.30px;top:711.14px;font-size:12px;color:#6d6d6d;font-family:'Liberation Sans';transform:scaleX(0.9505);transform-origin:0 0;">40 Mhz</div><div class="a" style="left:1051px;top:839px;width:527px;height:1px;background:#d8d8d8"></div>
<div class="t" style="left:953.00px;top:833.84px;font-size:12px;color:#000;font-family:'Liberation Sans';transform:scaleX(0.9753);transform-origin:0 0;">Download Panel 1</div><div class="a" style="left:944px;top:847px;width:77px;height:53px;background:#00f500"></div>
<div class="t" style="left:957.00px;top:857.62px;font-size:19px;color:#f0fff0;font-family:'Liberation Sans';transform:scaleX(0.7900);transform-origin:0 0;-webkit-text-stroke:0.6px #f0fff0;">FINISH</div><svg class="a" style="left:968px;top:883px" width="25" height="12" viewBox="0 0 25 12"><g stroke="#e8ffe8" stroke-width="1.1" fill="none"><path d="M5.5 0.5V2M1 3.5V2H10.5V3.5M3 4.5H8.5M1.5 6.5H10.5M4.5 6.5V11.5M7 6.5V10.5Q7 11.5 8.5 11.5H11"/><path d="M14.5 2H24M15.5 2V8Q15.5 10 13.5 11.5M15.5 5H18.5V9M19.5 0.5Q19.5 7 24 11.5M23.5 4Q22 9 17 11.5M22 0.8L23.5 1.8"/></g></svg>
<div class="a" style="left:1023px;top:852px;width:553px;height:48px;background:#fff;border:1px solid #7a7a7a;border-bottom:none"></div>
<div class="a" style="left:1558px;top:853px;width:17px;height:47px;background:#f0f0f0"></div>
<svg class="a" style="left:0;top:0;overflow:visible" width="1" height="1"><path d="M1561.5 865.2L1565.5 860.8L1569.5 865.2" stroke="#c0c0c0" stroke-width="1.6" fill="none"/></svg>
<div class="t" style="left:1029.70px;top:856.54px;font-size:12px;color:#000;font-family:'Liberation Sans';transform:scaleX(0.8738);transform-origin:0 0;">AP:  E465B86AEF05  STA:  E465B86AEF04</div><div class="t" style="left:1029.70px;top:871.84px;font-size:12px;color:#000;font-family:'Liberation Sans';transform:scaleX(0.8702);transform-origin:0 0;">BT:  E465B86AEF06  ETHERNET:  E465B86AEF07</div></div></div>
<div class="win shadow" id="flash" style="left:215px;top:604px;width:742px;height:296px;background:#fff">
 <div class="a" style="left:0;top:0;width:742px;height:296px;border:1px solid #4d4d4d;border-bottom:none;border-top-color:#d0d0d0"></div>
 <svg class="a" style="left:9px;top:6px" width="16" height="16" viewBox="0 0 16 16"><g fill="#1ba1e2"><circle cx="8" cy="8" r="5.6"/><rect x="6.3" y="0.3" width="3.4" height="4" rx="0.8" transform="rotate(0 8 8)"/><rect x="6.3" y="0.3" width="3.4" height="4" rx="0.8" transform="rotate(45 8 8)"/><rect x="6.3" y="0.3" width="3.4" height="4" rx="0.8" transform="rotate(90 8 8)"/><rect x="6.3" y="0.3" width="3.4" height="4" rx="0.8" transform="rotate(135 8 8)"/><rect x="6.3" y="0.3" width="3.4" height="4" rx="0.8" transform="rotate(180 8 8)"/><rect x="6.3" y="0.3" width="3.4" height="4" rx="0.8" transform="rotate(225 8 8)"/><rect x="6.3" y="0.3" width="3.4" height="4" rx="0.8" transform="rotate(270 8 8)"/><rect x="6.3" y="0.3" width="3.4" height="4" rx="0.8" transform="rotate(315 8 8)"/></g><circle cx="8" cy="8" r="2.3" fill="#fff"/></svg>
 <div class="t" style="left:31px;top:9px;font-size:12px;color:#000;font-family:'Liberation Sans';transform:scaleX(0.9827);transform-origin:0 0;">C:\Users\Piotr_2\Downloads\flash_download_tool_3.9.2 (1)\flash_download_tool_3.9.2\flash_download_too...</div>
 <div class="a" style="left:622px;top:14px;width:10px;height:1px;background:#000"></div>
 <div class="a" style="left:667px;top:9px;width:10px;height:10px;border:1px solid #000"></div>
 <svg class="a" style="left:713px;top:9px" width="10" height="10"><path d="M0 0L10 10M10 0L0 10" stroke="#000" stroke-width="1.1"/></svg>
 <div class="a mono" style="left:1px;top:30px;width:723px;height:266px;background:#000;color:#c0c0c0;font-size:13.33px;line-height:16px;white-space:pre;padding-top:2px">test offset :  0 0x0
case ok
..
Uploading stub...
Running stub...
Stub running...
FLASH_CRYPT_CNT 0
ABS_DONE_0 False
test offset :  65536 0x10000
case ok
test offset :  57344 0xe000
case ok
test offset :  4096 0x1000
case ok
test offset :  32768 0x8000
case ok</div>
 <div class="a" style="left:1px;top:170px;width:8px;height:4px;background:#f2f2f2"></div>
 <div class="a" style="left:724px;top:30px;width:17px;height:266px;background:#f0f0f0"></div>
 <div class="a" style="left:724px;top:30px;width:17px;height:17px;background:#dadada"></div>
 <svg class="a" style="left:728px;top:36px" width="9" height="6"><path d="M0.8 5.2L4.5 1.5L8.2 5.2" stroke="#000" stroke-width="2" fill="none"/></svg>
 <div class="a" style="left:725px;top:69px;width:15px;height:17px;background:#cdcdcd"></div>
</div>
<div class="a" style="left:0;top:0;width:1600px;height:194px;background:#fff"></div>
</body></html>
